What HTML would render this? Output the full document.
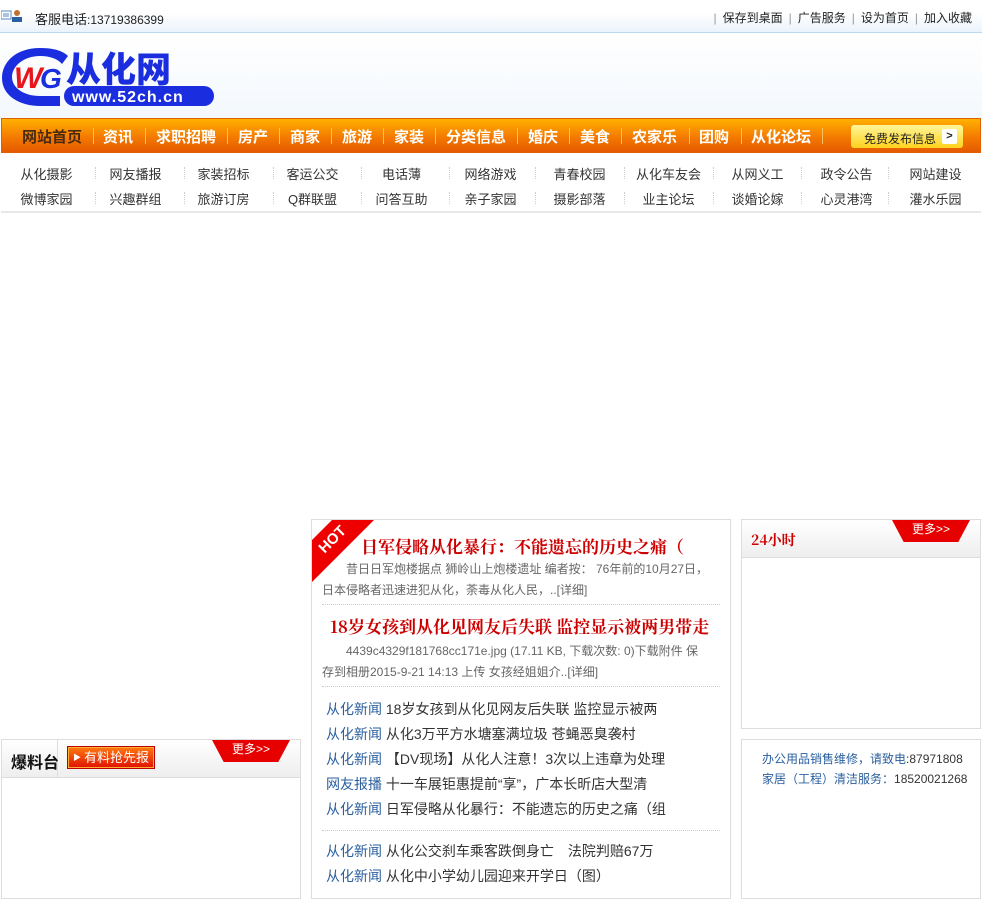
<!DOCTYPE html>
<html><head><meta charset="utf-8">
<style>
*{margin:0;padding:0;box-sizing:border-box}
body{width:982px;height:893px;overflow:hidden;background:#fff;font-family:"Liberation Sans","Noto Sans CJK SC",sans-serif;font-size:12px;color:#333;position:relative}
.abs{position:absolute}
#top{left:0;top:0;width:982px;height:33px;background:linear-gradient(#fff,#fff 40%,#eaf3fb);border-bottom:1px solid #bcd8ef}
#top .l{left:35px;top:9px;font-size:12px;color:#222}
#top .r{right:10px;top:9px;font-size:12px;color:#222;word-spacing:0}
#top .r span{color:#999;margin:0 6px}
#logo{left:0;top:34px;width:982px;height:84px;background:linear-gradient(#fff,#f3f8fd)}
#nav{left:1px;top:118px;width:980px;height:35px;border:1px solid #e06000;background:linear-gradient(#ffb000,#f47a00 55%,#e45a00)}
#nav a{position:absolute;top:9px;font-size:15px;font-weight:bold;color:#fff;font-family:"Noto Sans CJK SC",sans-serif;line-height:18px}
#nav i{position:absolute;top:9px;width:1px;height:16px;background:#ffc060}
#free{position:absolute;left:849px;top:6px;width:112px;height:23px;border-radius:3px;background:linear-gradient(#fff59a,#ffd21c);font-size:12px;color:#222;padding:5px 0 0 13px}
#free b{position:absolute;right:6px;top:4px;width:15px;height:15px;background:#fff;border-radius:2px;font-size:11px;line-height:15px;text-align:center}
#sub{left:1px;top:153px;width:980px;height:60px;border-bottom:2px solid #e8e8e8;background:#fff}
#sub div{position:absolute;width:89px;text-align:center;font-size:13px;color:#333}
#sub i{position:absolute;width:0;height:12px;border-left:1px dotted #ccc}
.box{border:1px solid #ddd;position:absolute}
.hd{position:absolute;left:0;top:0;right:0;height:38px;background:linear-gradient(#fff,#eee);border-bottom:1px solid #ddd}
.more{position:absolute;width:78px;height:22px;background:#e60000;color:#fff;font-size:12px;text-align:center;line-height:19px;clip-path:polygon(0 0,100% 0,85% 100%,15% 100%);border-radius:0 0 12px 12px}
.mid{left:311px;top:519px;width:420px;height:380px;border:1px solid #ddd}
.t{position:absolute;font-family:"Noto Serif CJK SC",serif;font-weight:bold;font-size:17px;color:#c00;white-space:nowrap}
.s{position:absolute;font-size:12px;color:#666;line-height:21px;white-space:nowrap}
.dot{position:absolute;left:10px;width:398px;border-top:1px dotted #ccc}
.li{position:absolute;left:14px;font-size:14px;color:#333;white-space:nowrap}
.li span{color:#2a5f9e}
</style></head><body>
<div id="top" class="abs">
 <svg class="abs" style="left:1px;top:9px" width="22" height="14"><rect x="0" y="2" width="10" height="8" fill="#fff" stroke="#5a8ac0"/><line x1="2" y1="5" x2="8" y2="5" stroke="#5a8ac0"/><line x1="2" y1="7" x2="8" y2="7" stroke="#5a8ac0"/><circle cx="16" cy="4" r="3" fill="#c07030"/><rect x="11" y="8" width="10" height="5" fill="#2a5fa0"/></svg>
 <div class="abs l"><span style="font-size:13px">客服电话</span>:13719386399</div>
 <div class="abs r"><span>|</span>保存到桌面<span>|</span>广告服务<span>|</span>设为首页<span>|</span>加入收藏</div>
</div>
<div id="logo" class="abs">
 <svg class="abs" style="left:0;top:8px" width="220" height="66">
  <path d="M40 6 C16 6 2 20 2 36 C2 54 20 64 40 64 L60 64 L60 54 L40 54 C24 54 12 46 12 35 C12 24 24 14 40 14 C50 14 58 17 62 22 L68 14 C62 8 52 6 40 6Z" fill="#1a2ee0"/>
  <text x="14" y="46" font-family="Liberation Sans" font-style="italic" font-weight="bold" font-size="30" fill="#e8161c">W</text>
  <text x="40" y="46" font-family="Liberation Sans" font-style="italic" font-weight="bold" font-size="28" fill="#1a2ee0">G</text>
  <text x="66" y="40" font-family="Noto Sans CJK SC" font-weight="900" font-size="35" fill="#1a2ee0">从化网</text>
  <rect x="64" y="44" width="150" height="20" rx="10" fill="#1a2ee0"/>
  <text x="72" y="60" font-family="Liberation Sans" font-weight="bold" font-size="16" fill="#fff" letter-spacing="1">www.52ch.cn</text>
 </svg>
</div>
<div id="nav" class="abs">
 <a style="left:20px;color:#4a2a10">网站首页</a><i style="left:91px"></i>
 <a style="left:101px">资讯</a><i style="left:143px"></i>
 <a style="left:154px">求职招聘</a><i style="left:225px"></i>
 <a style="left:236px">房产</a><i style="left:277px"></i>
 <a style="left:288px">商家</a><i style="left:329px"></i>
 <a style="left:340px">旅游</a><i style="left:381px"></i>
 <a style="left:392px">家装</a><i style="left:433px"></i>
 <a style="left:444px">分类信息</a><i style="left:515px"></i>
 <a style="left:526px">婚庆</a><i style="left:567px"></i>
 <a style="left:578px">美食</a><i style="left:619px"></i>
 <a style="left:630px">农家乐</a><i style="left:687px"></i>
 <a style="left:697px">团购</a><i style="left:739px"></i>
 <a style="left:749px">从化论坛</a><i style="left:820px"></i>
 <div id="free">免费发布信息<b>&gt;</b></div>
</div>
<div id="sub" class="abs">
 <div style="left:1px;top:11px">从化摄影</div><div style="left:90px;top:11px">网友播报</div><div style="left:178px;top:11px">家装招标</div><div style="left:267px;top:11px">客运公交</div><div style="left:356px;top:11px">电话薄</div><div style="left:445px;top:11px">网络游戏</div><div style="left:534px;top:11px">青春校园</div><div style="left:623px;top:11px">从化车友会</div><div style="left:712px;top:11px">从网义工</div><div style="left:801px;top:11px">政令公告</div><div style="left:890px;top:11px">网站建设</div>
 <div style="left:1px;top:36px">微博家园</div><div style="left:90px;top:36px">兴趣群组</div><div style="left:178px;top:36px">旅游订房</div><div style="left:267px;top:36px">Q群联盟</div><div style="left:356px;top:36px">问答互助</div><div style="left:445px;top:36px">亲子家园</div><div style="left:534px;top:36px">摄影部落</div><div style="left:623px;top:36px">业主论坛</div><div style="left:712px;top:36px">谈婚论嫁</div><div style="left:801px;top:36px">心灵港湾</div><div style="left:890px;top:36px">灌水乐园</div>
 <i style="left:94px;top:14px"></i><i style="left:183px;top:14px"></i><i style="left:272px;top:14px"></i><i style="left:360px;top:14px"></i><i style="left:448px;top:14px"></i><i style="left:534px;top:14px"></i><i style="left:623px;top:14px"></i><i style="left:712px;top:14px"></i><i style="left:800px;top:14px"></i><i style="left:887px;top:14px"></i>
 <i style="left:94px;top:39px"></i><i style="left:183px;top:39px"></i><i style="left:272px;top:39px"></i><i style="left:360px;top:39px"></i><i style="left:448px;top:39px"></i><i style="left:534px;top:39px"></i><i style="left:623px;top:39px"></i><i style="left:712px;top:39px"></i><i style="left:800px;top:39px"></i><i style="left:887px;top:39px"></i>
</div>

<div class="box" style="left:1px;top:739px;width:300px;height:160px">
 <div class="hd"><div style="position:absolute;left:0;top:0;width:56px;height:38px;border-right:1px solid #ddd"></div>
  <div style="position:absolute;left:9px;top:9px;font-size:16px;font-weight:bold;color:#111">爆料台</div>
  <div style="position:absolute;left:65px;top:6px;width:88px;height:23px;border:1px solid #b00;background:linear-gradient(#ff7a10,#e01000);color:#fff;font-size:13px;line-height:21px;padding-left:16px;box-shadow:inset 0 0 0 1px #ffb030">有料抢先报<span style="position:absolute;left:5px;top:0;font-size:8px">▶</span></div>
  <div class="more" style="left:210px;top:0">更多&gt;&gt;</div>
 </div>
</div>

<div class="abs mid">
 <svg class="abs" style="left:0;top:0" width="64" height="64"><polygon points="0,20 20,0 62,0 0,62" fill="#e00"/><text x="21" y="20" text-anchor="middle" dominant-baseline="middle" transform="rotate(-45 21 20)" font-family="Liberation Sans" font-weight="bold" font-size="15" fill="#fff">HOT</text></svg>
 <div class="t" style="left:49px;top:13px">日军侵略从化暴行：不能遗忘的历史之痛（</div>
 <div class="s" style="left:10px;top:39px;text-indent:24px">昔日日军炮楼据点 狮岭山上炮楼遗址 编者按： 76年前的10月27日，<br>日本侵略者迅速进犯从化，荼毒从化人民，..[详细]</div>
 <div class="dot" style="top:84px"></div>
 <div class="t" style="left:18px;top:93px">18岁女孩到从化见网友后失联 监控显示被两男带走</div>
 <div class="s" style="left:10px;top:121px;text-indent:24px">4439c4329f181768cc171e.jpg (17.11 KB, 下载次数: 0)下载附件 保<br>存到相册2015-9-21 14:13 上传 女孩经姐姐介..[详细]</div>
 <div class="dot" style="top:166px"></div>
 <div class="li" style="top:179px"><span>从化新闻</span> 18岁女孩到从化见网友后失联 监控显示被两</div>
 <div class="li" style="top:204px"><span>从化新闻</span> 从化3万平方水塘塞满垃圾 苍蝇恶臭袭村</div>
 <div class="li" style="top:229px"><span>从化新闻</span> 【DV现场】从化人注意！3次以上违章为处理</div>
 <div class="li" style="top:254px"><span>网友报播</span> 十一车展钜惠提前“享”，广本长昕店大型清</div>
 <div class="li" style="top:279px"><span>从化新闻</span> 日军侵略从化暴行：不能遗忘的历史之痛（组</div>
 <div class="dot" style="top:310px"></div>
 <div class="li" style="top:321px"><span>从化新闻</span> 从化公交刹车乘客跌倒身亡　法院判赔67万</div>
 <div class="li" style="top:346px"><span>从化新闻</span> 从化中小学幼儿园迎来开学日（图）</div>
</div>

<div class="box" style="left:741px;top:519px;width:240px;height:210px">
 <div class="hd"><div style="position:absolute;left:9px;top:10px;font-family:'Noto Serif CJK SC',serif;font-weight:bold;font-size:14px;color:#c00">24小时</div>
  <div class="more" style="left:150px;top:0">更多&gt;&gt;</div></div>
</div>
<div class="box" style="left:741px;top:739px;width:240px;height:160px">
 <div style="position:absolute;left:20px;top:9px;font-size:12px;line-height:20px;color:#2a5f9e">办公用品销售维修，请致电<span style="color:#333">:87971808</span><br>家居（工程）清洁服务：<span style="color:#333">18520021268</span></div>
</div>
</body></html>
